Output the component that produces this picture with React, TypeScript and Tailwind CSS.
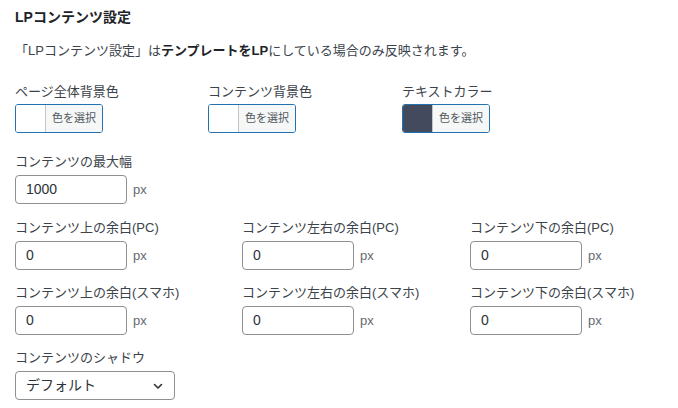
import React from "react";

const font = { fontFamily: '"Liberation Sans", "Noto Sans CJK JP", sans-serif' };

function ColorPicker({ label, color }: { label: string; color?: string }) {
  return (
    <div>
      <div className="h-[18px] text-[13px] leading-[18px] text-[#3c434a]">{label}</div>
      <div className="mt-[3px] flex h-[29px] w-[88px] overflow-hidden rounded-[3px] border border-[#2271b1]">
        <div className={`w-[30px] border-r border-[#c3c4c7] ${color ?? "bg-white"}`} />
        <div className="flex flex-1 items-center justify-center bg-[#f6f7f7] text-[11px] text-[#50575e]">
          色を選択
        </div>
      </div>
    </div>
  );
}

function NumberField({ label, value }: { label: string; value: string }) {
  return (
    <div>
      <div className="h-[18px] text-[13px] leading-[18px] text-[#3c434a]">{label}</div>
      <div className="mt-[4px] flex items-center">
        <div className="flex h-[29px] w-[112px] items-center rounded-[4px] border border-[#8c8f94] bg-white pl-[10px] text-[14px] text-[#2c3338]">
          {value}
        </div>
        <span className="ml-[6px] text-[13px] text-[#646970]">px</span>
      </div>
    </div>
  );
}

export default function App() {
  return (
    <div className="min-h-[408px] w-[678px] bg-white pl-[15px] pt-[8px]" style={font}>
      <h2 className="h-[18px] text-[14px] font-bold leading-[18px] text-[#1d2327]">LPコンテンツ設定</h2>

      <p className="mt-[16px] h-[18px] text-[13px] leading-[18px] text-[#3c434a]">
        「LPコンテンツ設定」は<b className="text-[#1d2327]">テンプレートをLP</b>にしている場合のみ反映されます。
      </p>

      {/* Colors */}
      <div className="mt-[23px] grid grid-cols-[193px_194px_1fr]">
        <ColorPicker label="ページ全体背景色" />
        <ColorPicker label="コンテンツ背景色" />
        <ColorPicker label="テキストカラー" color="bg-[#434a5e]" />
      </div>

      <div className="mt-[20px]">
        <NumberField label="コンテンツの最大幅" value="1000" />
      </div>

      <div className="mt-[15px] grid grid-cols-[227px_228px_1fr]">
        <NumberField label="コンテンツ上の余白(PC)" value="0" />
        <NumberField label="コンテンツ左右の余白(PC)" value="0" />
        <NumberField label="コンテンツ下の余白(PC)" value="0" />
      </div>

      <div className="mt-[14px] grid grid-cols-[227px_228px_1fr]">
        <NumberField label="コンテンツ上の余白(スマホ)" value="0" />
        <NumberField label="コンテンツ左右の余白(スマホ)" value="0" />
        <NumberField label="コンテンツ下の余白(スマホ)" value="0" />
      </div>

      {/* Shadow */}
      <div className="mt-[14px]">
        <div className="h-[18px] text-[13px] leading-[18px] text-[#3c434a]">コンテンツのシャドウ</div>
        <div className="mt-[4px] flex h-[29px] w-[160px] items-center justify-between rounded-[4px] border border-[#8c8f94] bg-white pl-[10px] pr-[10px] text-[14px] text-[#2c3338]">
          <span>デフォルト</span>
          <svg width="12" height="12" viewBox="0 0 12 12" fill="none" stroke="#2c3338" strokeWidth="1.6" strokeLinecap="round" strokeLinejoin="round">
            <path d="M2.5 4.5 6 8l3.5-3.5" />
          </svg>
        </div>
      </div>
    </div>
  );
}
